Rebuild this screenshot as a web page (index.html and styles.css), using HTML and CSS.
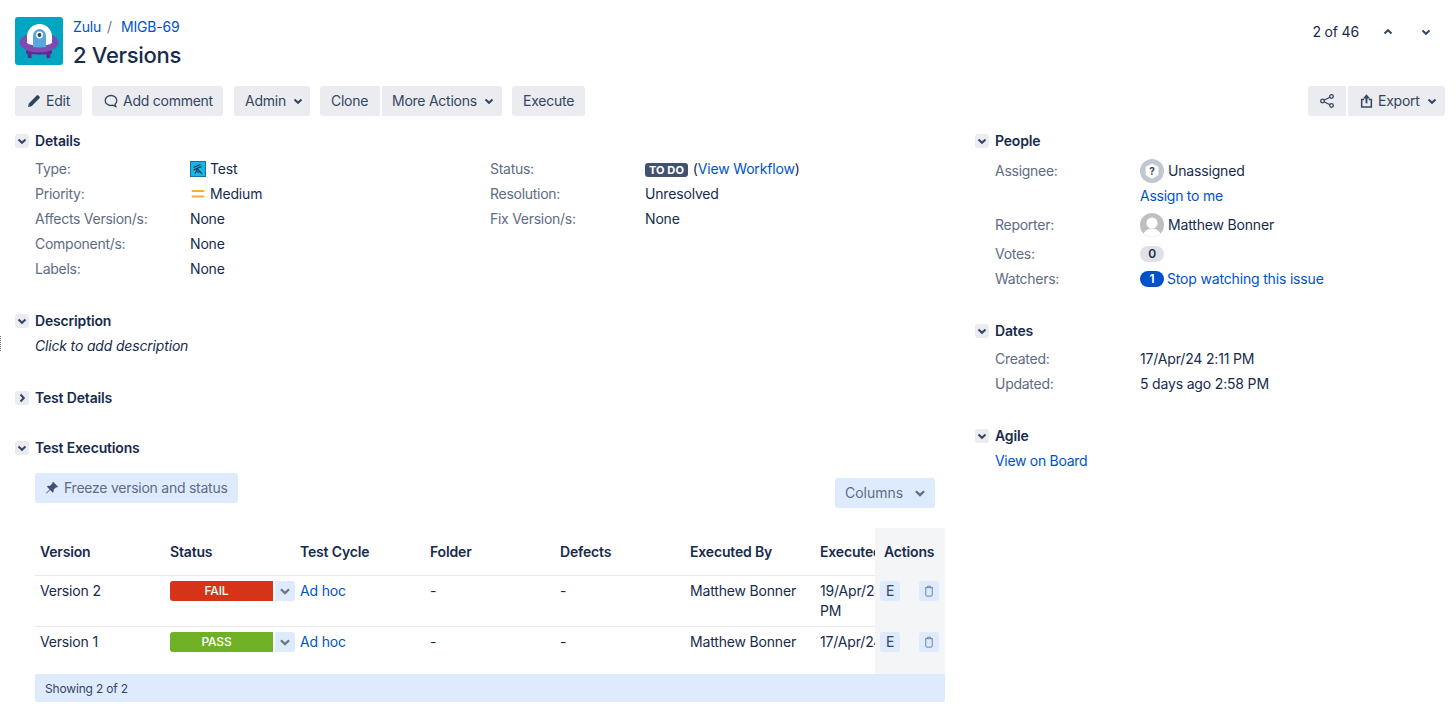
FILE: index.html
```html
<!DOCTYPE html>
<html lang="en">
<head>
<meta charset="utf-8">
<title>2 Versions</title>
<link rel="stylesheet" href="styles.css">
</head>
<body>
<span class="edge-dots"></span>
<header class="issue-header">
  <svg class="logo" viewBox="0 0 48 48" aria-hidden="true">
    <rect width="48" height="48" rx="3" fill="#00a5c2"/>
    <path d="M12 33h4.500v8H13zM31.500 33H36l-1 8h-3.500z" fill="#5c2d91"/>
    <path d="M11 33c3 2.500 23 2.500 26 0v3.500c-4 1.500-22 1.500-26 0z" fill="#5c2d91"/>
    <ellipse cx="24" cy="25.500" rx="19.500" ry="9.800" fill="#7e4bb3"/>
    <path d="M12 26V19.500a12.500 12.500 0 0 1 25 0V26c-4 3.500-21 3.500-25 0z" fill="#fff"/>
    <path d="M18 30V18.500a6.500 6.500 0 0 1 13 0V30c-3 .6-10 .6-13 0z" fill="#5aa7e0"/>
    <circle cx="24.500" cy="18" r="3.400" fill="#fff"/>
    <circle cx="24.500" cy="18" r="1.900" fill="#243f73"/>
  </svg>
  <div class="titles">
    <nav class="crumbs"><a>Zulu</a><span class="slash">/</span><a>MIGB-69</a></nav>
    <h1>2 Versions</h1>
  </div>
  <div class="pager">
    <span>2 of 46</span>
    <svg class="pager-up" viewBox="0 0 12 12"><path d="M2.500 7.500 6 4.200l3.500 3.300" class="chev"/></svg>
    <svg class="pager-down" viewBox="0 0 12 12"><path d="M2.500 4.500 6 7.800l3.500-3.300" class="chev"/></svg>
  </div>
</header>

<div class="toolbar">
  <button class="btn edit">
    <svg class="ico" viewBox="0 0 14 14"><path d="M1 13l.8-3.600L9.700 1.500a1.200 1.200 0 0 1 1.700 0l1.100 1.100a1.200 1.200 0 0 1 0 1.700L4.600 12.200z" fill="#344563"/></svg>Edit
  </button>
  <button class="btn comment">
    <svg class="ico" viewBox="0 0 14 14"><path d="M7 1.500c3.300 0 5.800 2.200 5.800 5 0 1.500-.7 2.800-1.800 3.700l.8 2.300-3-1.300c-.6.200-1.200.3-1.800.3-3.300 0-5.800-2.200-5.800-5s2.500-5 5.800-5z" fill="none" stroke="#344563" stroke-width="1.300"/></svg>Add comment
  </button>
  <button class="btn admin">Admin<svg class="caret" viewBox="0 0 12 12"><path d="M2.500 4.500 6 7.800l3.500-3.300" class="chev"/></svg></button>
  <div class="btn-group">
    <button class="btn clone">Clone</button>
    <button class="btn more">More Actions<svg class="caret" viewBox="0 0 12 12"><path d="M2.500 4.500 6 7.800l3.500-3.300" class="chev"/></svg></button>
  </div>
  <button class="btn execute">Execute</button>
  <div class="btn-group push">
    <button class="btn share" aria-label="Share">
      <svg class="ico-share" viewBox="0 0 16 16"><path d="M12.500 3.500 3.500 8l9 4.500" fill="none" stroke="#344563" stroke-width="1.300"/><circle cx="12.500" cy="3.500" r="1.800" fill="#ebecf0" stroke="#344563" stroke-width="1.300"/><circle cx="3.500" cy="8" r="1.800" fill="#ebecf0" stroke="#344563" stroke-width="1.300"/><circle cx="12.500" cy="12.500" r="1.800" fill="#ebecf0" stroke="#344563" stroke-width="1.300"/></svg>
    </button>
    <button class="btn export">
      <svg class="ico-export" viewBox="0 0 14 16"><path d="M4.500 6.500H1.800v8h10.400v-8H9.500" fill="none" stroke="#344563" stroke-width="1.600"/><path d="M7 10.500V3" stroke="#344563" stroke-width="2"/><path d="M3.200 5.200 7 .8l3.800 4.400z" fill="#344563"/></svg>Export<svg class="caret" viewBox="0 0 12 12"><path d="M2.500 4.500 6 7.800l3.500-3.300" class="chev"/></svg>
    </button>
  </div>
</div>

<div class="columns">
  <main class="main-col">
    <section class="module details">
      <h2 class="mod-head"><span class="toggle"><svg viewBox="0 0 12 12"><path d="M2.500 4.500 6 7.800l3.500-3.300" class="chev"/></svg></span>Details</h2>
      <div class="detail-grid">
        <dl class="fields">
          <dt>Type:</dt>
          <dd class="with-icon">
            <svg class="type-icon" viewBox="0 0 16 16"><rect x=".5" y=".5" width="15" height="15" fill="#1cb4e2" stroke="#14769a"/><path d="M3.500 6.500 10.500 3.500M3.500 9 11.500 5.500M5 12.500l2.500-4.500 4.500 5M7 11h4" fill="none" stroke="#12324f" stroke-width="1.100"/></svg>Test
          </dd>
          <dt>Priority:</dt>
          <dd class="with-icon">
            <svg class="type-icon" viewBox="0 0 16 16"><path d="M2.500 5h11M2.500 10.500h11" stroke="#ffab2e" stroke-width="2" stroke-linecap="round"/></svg>Medium
          </dd>
          <dt>Affects Version/s:</dt><dd>None</dd>
          <dt>Component/s:</dt><dd>None</dd>
          <dt>Labels:</dt><dd>None</dd>
        </dl>
        <dl class="fields">
          <dt>Status:</dt>
          <dd class="status-value"><span class="lozenge">TO DO</span> (<a>View Workflow</a>)</dd>
          <dt>Resolution:</dt><dd>Unresolved</dd>
          <dt>Fix Version/s:</dt><dd>None</dd>
        </dl>
      </div>
    </section>

    <section class="module description">
      <h2 class="mod-head"><span class="toggle"><svg viewBox="0 0 12 12"><path d="M2.500 4.500 6 7.800l3.500-3.300" class="chev"/></svg></span>Description</h2>
      <p class="desc-text">Click to add description</p>
    </section>

    <section class="module test-details">
      <h2 class="mod-head"><span class="toggle"><svg viewBox="0 0 12 12"><path d="M4.500 2.500 7.800 6l-3.300 3.500" class="chev"/></svg></span>Test Details</h2>
    </section>

    <section class="module executions">
      <h2 class="mod-head"><span class="toggle"><svg viewBox="0 0 12 12"><path d="M2.500 4.500 6 7.800l3.500-3.300" class="chev"/></svg></span>Test Executions</h2>
      <div class="exec-tools">
        <button class="btn-light freeze">
          <svg class="ico" viewBox="0 0 14 14"><path d="M8.300 1 13 5.700l-1 .8-.9-.3L8.600 8.700c.3 1.200 0 2.200-.7 3L5.100 8.900 1.500 12.500 1 12l3.600-3.600-2.800-2.800c.8-.7 1.800-1 3-.7l2.500-2.500-.2-.9z" fill="#42526e"/></svg>Freeze version and status
        </button>
        <button class="btn-light columns-btn">Columns<svg class="caret-lg" viewBox="0 0 12 12"><path d="M2.500 4.500 6 7.800l3.500-3.300" class="chev"/></svg></button>
      </div>
      <div class="exec-table">
        <div class="exec-scroll">
          <div class="row head-row">
            <span>Version</span><span>Status</span><span>Test Cycle</span><span>Folder</span><span>Defects</span><span>Executed By</span><span>Executed On</span>
          </div>
          <div class="row row-tall">
            <span>Version 2</span>
            <span class="status-cell"><span class="status fail">FAIL</span><span class="status-drop"><svg viewBox="0 0 12 12"><path d="M2.500 4.500 6 7.800l3.500-3.300" class="chev grey"/></svg></span></span>
            <a>Ad hoc</a><span>-</span><span>-</span><span>Matthew Bonner</span><span>19/Apr/24 2:58<br>PM</span>
          </div>
          <div class="row row-short">
            <span>Version 1</span>
            <span class="status-cell"><span class="status pass">PASS</span><span class="status-drop"><svg viewBox="0 0 12 12"><path d="M2.500 4.500 6 7.800l3.500-3.300" class="chev grey"/></svg></span></span>
            <a>Ad hoc</a><span>-</span><span>-</span><span>Matthew Bonner</span><span>17/Apr/24 2:11 PM</span>
          </div>
        </div>
        <div class="actions-col">
          <div class="act-head">Actions</div>
          <div class="act-row act-tall">
            <span class="act-btn">E</span>
            <span class="act-btn"><svg viewBox="0 0 12 12"><path d="M2.800 3v7.300c0 .5.300.8.800.8h4.800c.5 0 .8-.3.800-.8V3M2 2.700h8M4.500 2.500V1.200h3v1.300" fill="none" stroke="#6b778c" stroke-width=".9"/></svg></span>
          </div>
          <div class="act-row act-short">
            <span class="act-btn">E</span>
            <span class="act-btn"><svg viewBox="0 0 12 12"><path d="M2.800 3v7.300c0 .5.300.8.800.8h4.800c.5 0 .8-.3.800-.8V3M2 2.700h8M4.500 2.500V1.200h3v1.300" fill="none" stroke="#6b778c" stroke-width=".9"/></svg></span>
          </div>
        </div>
      </div>
      <div class="exec-foot">Showing 2 of 2</div>
    </section>
  </main>

  <aside class="side-col">
    <section class="module people">
      <h2 class="mod-head"><span class="toggle"><svg viewBox="0 0 12 12"><path d="M2.500 4.500 6 7.800l3.500-3.300" class="chev"/></svg></span>People</h2>
      <dl class="side-fields">
        <dt class="assignee-l">Assignee:</dt>
        <dd class="assignee">
          <span class="person">
            <svg class="avatar" viewBox="0 0 24 24"><circle cx="12" cy="12" r="12" fill="#c1c7d0"/><path d="M12 5 18 8v8l-6 3.500L6 16V8z" fill="#fff" stroke="#fff" stroke-width=".8" stroke-linejoin="round"/><text x="12" y="15.500" text-anchor="middle" class="qmark">?</text></svg>Unassigned
          </span>
          <a class="assign-link">Assign to me</a>
        </dd>
        <dt class="reporter-l">Reporter:</dt>
        <dd class="reporter">
          <span class="person">
            <svg class="avatar" viewBox="0 0 24 24"><defs><clipPath id="rc"><circle cx="12" cy="12" r="12"/></clipPath></defs><g clip-path="url(#rc)"><rect width="24" height="24" fill="#bfbfbf"/><circle cx="12" cy="10" r="5.600" fill="#fff"/><ellipse cx="12" cy="23" rx="9" ry="7.500" fill="#fff"/></g></svg>Matthew Bonner
          </span>
        </dd>
        <dt>Votes:</dt><dd><span class="pill grey-pill">0</span></dd>
        <dt>Watchers:</dt><dd class="watchers"><span class="pill blue-pill">1</span><a>Stop watching this issue</a></dd>
      </dl>
    </section>
    <section class="module dates">
      <h2 class="mod-head"><span class="toggle"><svg viewBox="0 0 12 12"><path d="M2.500 4.500 6 7.800l3.500-3.300" class="chev"/></svg></span>Dates</h2>
      <dl class="side-fields">
        <dt>Created:</dt><dd>17/Apr/24 2:11 PM</dd>
        <dt>Updated:</dt><dd>5 days ago 2:58 PM</dd>
      </dl>
    </section>
    <section class="module agile">
      <h2 class="mod-head"><span class="toggle"><svg viewBox="0 0 12 12"><path d="M2.500 4.500 6 7.800l3.500-3.300" class="chev"/></svg></span>Agile</h2>
      <a class="board-link">View on Board</a>
    </section>
  </aside>
</div>
</body>
</html>
```

FILE: styles.css
```css
* { box-sizing: border-box; }

html, body { height: 717px; overflow: hidden; }

body {
  margin: 0;
  padding: 17px 11px 0 15px;
  background: #fff;
  color: #172b4d;
  font: 14px/20px Inter, "Liberation Sans", sans-serif;
  letter-spacing: -.17px;
  position: relative;
}

a { color: #0052cc; text-decoration: none; }

.chev { fill: none; stroke: #344563; stroke-width: 2; }
.chev.grey { stroke: #6b778c; }

.edge-dots {
  position: absolute;
  left: 0;
  top: 336px;
  height: 15px;
  border-left: 1px dotted #6b778c;
}

/* header */
.issue-header { display: flex; height: 48px; }
.logo { width: 48px; height: 48px; flex: none; }
.titles { margin-left: 10px; }
.crumbs { display: flex; height: 20px; line-height: 20px; }
.slash { color: #6b778c; margin: 0 9px 0 6px; }
h1 {
  margin: 2px 0 0;
  font-size: 22px;
  line-height: 32px;
  font-weight: 500;
  letter-spacing: -.3px;
}
.pager {
  margin-left: auto;
  display: flex;
  align-items: center;
  height: 30px;
}
.pager svg { width: 12px; height: 12px; flex: none; }
.pager-up { margin-left: 23px; }
.pager-down { margin: 0 13px 0 26px; }

/* toolbar */
.toolbar { display: flex; gap: 10px; margin-top: 21px; }
.btn {
  display: inline-flex;
  align-items: center;
  height: 30px;
  padding: 0 10px;
  border: 0;
  border-radius: 3px;
  background: #ebecf0;
  color: #344563;
  font: inherit;
  letter-spacing: -.25px;
  white-space: nowrap;
}
.btn-group { display: flex; gap: 2px; }
.btn-group .btn:first-child { border-radius: 3px 0 0 3px; }
.btn-group .btn:last-child { border-radius: 0 3px 3px 0; }
.push { margin-left: auto; }
.ico { width: 14px; height: 14px; margin-right: 5px; flex: none; }
.caret { width: 12px; height: 12px; margin-left: 6px; flex: none; }
.edit { width: 67px; padding: 0 0 0 12px; }
.comment { width: 131px; padding: 0 0 0 12px; }
.admin { width: 76px; margin-left: 1px; padding: 0 0 0 11px; }
.clone { width: 60px; padding: 0 0 0 11px; }
.more { width: 120px; }
.execute { width: 73px; padding: 0 0 0 11px; }
.share { width: 38px; justify-content: center; padding: 0; }
.ico-share { width: 16px; height: 16px; }
.export { width: 97px; padding: 0 0 0 12px; }
.ico-export { width: 13px; height: 16px; margin-right: 5px; flex: none; }

/* columns */
.columns { display: flex; margin-top: 15px; }
.main-col { width: 930px; flex: none; }
.side-col { margin-left: 30px; flex: 1; }

.mod-head {
  display: flex;
  align-items: center;
  gap: 6px;
  height: 20px;
  margin: 0;
  font-size: 14px;
  line-height: 20px;
  font-weight: 600;
}
.toggle {
  display: flex;
  align-items: center;
  justify-content: center;
  width: 14px;
  height: 14px;
  border-radius: 3px;
  background: #ebecf0;
}
.toggle svg { width: 12px; height: 12px; flex: none; }

/* details */
.detail-grid { display: grid; grid-template-columns: 455px 455px; margin: 5px 0 0 20px; }
.fields {
  display: grid;
  grid-template-columns: 155px 1fr;
  grid-auto-rows: 25px;
  margin: 0;
  align-content: start;
}
dt { color: #5e6c84; display: flex; align-items: center; letter-spacing: -.27px; }
dd { margin: 0; display: flex; align-items: center; white-space: nowrap; }
dd.status-value { display: block; line-height: 25px; }
.with-icon { gap: 4px; }
.type-icon { width: 16px; height: 16px; flex: none; }
.lozenge {
  display: inline-block;
  background: #42526e;
  color: #fff;
  font-size: 11px;
  line-height: 14px;
  font-weight: 700;
  padding: 0 4px;
  border-radius: 3px;
  margin-right: 1px;
  letter-spacing: .1px;
}

.description { margin-top: 30px; }
.desc-text { margin: 2px 0 0 20px; height: 25px; line-height: 25px; font-style: italic; }
.test-details { margin-top: 30px; }
.executions { margin-top: 30px; }

/* executions */
.exec-tools {
  display: flex;
  justify-content: space-between;
  align-items: flex-start;
  margin: 15px 10px 0 20px;
  height: 55px;
}
.btn-light {
  display: inline-flex;
  align-items: center;
  height: 30px;
  border: 0;
  border-radius: 3px;
  background: #deebff;
  color: #5e6c84;
  font: inherit;
  white-space: nowrap;
}
.freeze { width: 203px; padding: 0 10px 1px; letter-spacing: -.25px; }
.columns-btn { width: 100px; padding: 0 10px 1px; margin-top: 5px; }
.caret-lg { width: 14px; height: 14px; margin-left: 10px; flex: none; }
.caret-lg .chev { stroke: #5e6c84; }

.exec-table { display: flex; margin-left: 20px; width: 910px; }
.exec-scroll { width: 840px; overflow: hidden; flex: none; }
.row {
  display: grid;
  grid-template-columns: repeat(7, 130px);
  width: 910px;
  padding-left: 5px;
}
.row > * { white-space: nowrap; }
.head-row {
  height: 48px;
  padding-top: 14px;
  font-weight: 600;
  border-bottom: 1px solid #e8e9ed;
}
.row-tall { height: 51px; padding-top: 5px; border-bottom: 1px solid #e8e9ed; }
.row-short { height: 47px; padding-top: 5px; }
.status-cell { display: flex; gap: 2px; height: 20px; }
.status {
  width: 103px;
  height: 20px;
  border-radius: 3px 0 0 3px;
  color: #fff;
  font-size: 12px;
  font-weight: 500;
  line-height: 19px;
  text-align: center;
  padding-right: 10px;
}
.fail { background: #d63418; }
.pass { background: #70b024; }
.status-drop {
  width: 20px;
  height: 20px;
  border-radius: 0 3px 3px 0;
  background: #deebff;
  display: flex;
  align-items: center;
  justify-content: center;
}
.status-drop svg { width: 14px; height: 14px; flex: none; }

.actions-col { width: 70px; flex: none; background: #f4f5f7; }
.act-head { height: 48px; padding: 14px 0 0 9px; font-weight: 600; }
.act-row { display: flex; justify-content: space-between; padding: 5px 6px 0 5px; }
.act-tall { height: 51px; }
.act-short { height: 47px; }
.act-btn {
  display: flex;
  align-items: center;
  justify-content: center;
  width: 20px;
  height: 20px;
  border-radius: 3px;
  background: #deebff;
  color: #344563;
}
.act-btn svg { width: 12px; height: 12px; }

.exec-foot {
  margin-left: 20px;
  width: 910px;
  height: 28px;
  padding: 5px 10px 0;
  background: #deebff;
  border-radius: 0 0 3px 3px;
  font-size: 12px;
  color: #344563;
}

/* side */
.side-fields {
  display: grid;
  grid-template-columns: 145px 1fr;
  grid-auto-rows: 25px;
  margin: 8px 0 0 20px;
}
.people .side-fields { grid-template-rows: 50px 32px 25px 25px; }
dd.assignee { display: block; }
.assignee-l { align-items: flex-start; padding-top: 2px; }
.person { display: flex; align-items: center; height: 24px; gap: 4px; }
.avatar { width: 24px; height: 24px; flex: none; }
.qmark { font-size: 10px; font-weight: 700; fill: #344563; font-family: Inter, sans-serif; }
.assign-link { display: block; height: 25px; line-height: 25px; letter-spacing: -.25px; }
.reporter-l { align-items: flex-start; padding-top: 6px; }
dd.reporter { align-items: flex-start; padding-top: 4px; }
.pill {
  display: inline-block;
  width: 24px;
  height: 16px;
  border-radius: 8px;
  font-size: 12px;
  font-weight: 600;
  line-height: 16px;
  text-align: center;
  flex: none;
}
.grey-pill { background: #dfe1e6; color: #172b4d; }
.blue-pill { background: #0052cc; color: #fff; margin-right: 3px; }
.dates { margin-top: 30px; }
.dates .side-fields { margin-top: 5px; }
.agile { margin-top: 30px; }
.board-link { display: block; margin: 2px 0 0 20px; height: 25px; line-height: 25px; letter-spacing: -.3px; }
```
